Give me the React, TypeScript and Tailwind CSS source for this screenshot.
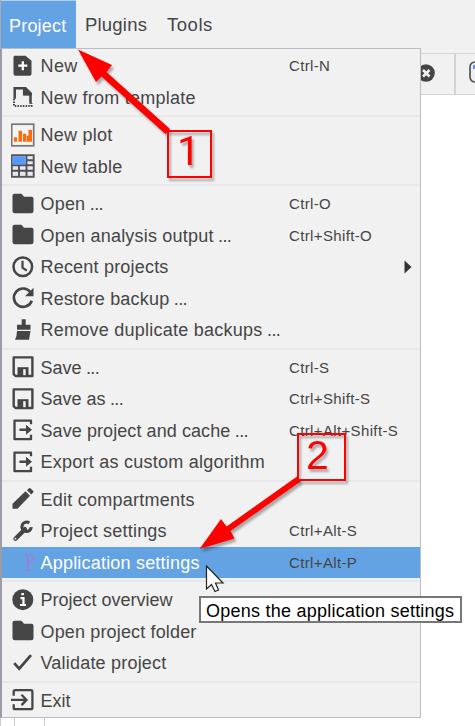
import React from "react";

const K = "#454545";

const icons: Record<string, React.ReactNode> = {
  add: (
    <>
      <path d="M4 2h11l6 5v13q0 2-2 2H5q-2 0-2-2V4q0-2 1-2z" fill={K} />
      <path d="M12.300 7.500v9M7.800 12h9" stroke="#fff" strokeWidth="2.300" />
    </>
  ),
  template: (
    <>
      <path d="M4.200 14V3.500h9.500V9.500H20V19" fill="none" stroke={K} strokeWidth="2.500" />
      <path d="M13 2.200h2.500l6 6v2.300H13z" fill={K} />
      <path d="M3.500 14v7.300h17.500v-3" fill="none" stroke={K} strokeWidth="2" strokeDasharray="1.500 1.200" />
    </>
  ),
  plot: (
    <>
      <rect x="1.200" y="1.500" width="22" height="21.600" fill="#f4f4f4" stroke="#777" strokeWidth="1.700" />
      <path d="M3.500 19v-4.500h3V19zM8 19V8h3.500v11zM12.500 19v-8h3V19zM16 19v-6h2V19zM18 19V7h3.500v12z" fill="#ff6b0a" />
    </>
  ),
  table: (
    <>
      <rect x="1.200" y="1.500" width="22" height="21.600" fill="#e8e8ee" stroke="#555" strokeWidth="1.900" />
      <path d="M1.500 11.500h22M1.500 17h22M16 1.500v21.500M8.500 12v11M16 6.500h7" stroke="#505050" strokeWidth="1.900" />
      <rect x="2.200" y="2.500" width="12.800" height="8.300" fill="#5599ff" />
    </>
  ),
  folder: <path d="M2 3.500q0-1.500 2-1.500h7l2.500 3H21q2 0 2 2v12q0 2.500-2.500 2.500h-16q-2.500 0-2.500-2.500z" fill={K} />,
  clock: (
    <>
      <circle cx="12.300" cy="12" r="9.300" fill="none" stroke={K} strokeWidth="2.500" />
      <path d="M12 6v7l4.300 3" fill="none" stroke={K} strokeWidth="2.200" />
    </>
  ),
  redo: (
    <>
      <path d="M20 6.500A9.200 9.200 0 1 0 21.300 15" fill="none" stroke={K} strokeWidth="2.600" />
      <path d="M23 2v8.500h-8.500z" fill={K} />
    </>
  ),
  broom: <path d="M11.200 1.500h4V7H20v5H6.500V7h4.700zM6.500 13.200H20L18.500 22H4.500q2-4 2-8.800z" fill={K} />,
  save: (
    <>
      <path d="M3.200 2.700h18.700v18.600H5l-1.800-1.800z" fill="none" stroke={K} strokeWidth="2.400" strokeLinejoin="round" />
      <path d="M7 12.500h11v8.500H7z" fill={K} />
      <path d="M12.700 14.500h2.500v6h-2.500z" fill="#f1f1f1" />
    </>
  ),
  export: (
    <>
      <path d="M20.500 6.500V3H4v18.500h16.500V17" fill="none" stroke={K} strokeWidth="2.300" strokeLinejoin="round" />
      <path d="M9 10.800h6.500V7l6 5-6 5v-3.800H9z" fill={K} />
    </>
  ),
  pencil: (
    <>
      <path d="M2 22v-5L15 4.500l4.500 4.500L7 22z" fill={K} />
      <path d="M16.500 3.500l1.700-1.700q1-1 2 0L22.500 4q1 1 0 2L20.800 7.800z" fill={K} />
    </>
  ),
  wrench: (
    <>
      <path d="M5 20L14.500 10.500" stroke={K} strokeWidth="4.400" strokeLinecap="round" />
      <path d="M18.800 4.200A4.700 4.700 0 1 0 20.800 8.500" fill="none" stroke={K} strokeWidth="3.100" />
      <circle cx="5" cy="20" r=".9" fill="#eee" />
    </>
  ),
  app: (
    <path
      d="M14.500 4.500q3 1 3 4V20M18 13q5.500-1.500 5-5.500Q22 4 18.500 5M14.500 20.500h4.500"
      fill="none"
      stroke="#987fdc"
      strokeWidth="1.800"
    />
  ),
  info: (
    <>
      <circle cx="12.300" cy="12" r="10.500" fill={K} />
      <path d="M10 10.500h3V17M9.500 17.300h6M10.800 6.500h2.600" fill="none" stroke="#fff" strokeWidth="2.200" />
    </>
  ),
  check: <path d="M3.700 12.500l5 5.500L20.500 4.500" fill="none" stroke={K} strokeWidth="2.700" />,
  exit: (
    <>
      <path d="M3.200 8V4q0-1.500 1.500-1.500h15.700q1.500 0 1.500 1.500v16q0 1.500-1.500 1.500H4.700q-1.500 0-1.500-1.500v-3.500" fill="none" stroke={K} strokeWidth="2.300" />
      <path d="M0.500 12.200H15M11 7l5 5.200-5 5.200" fill="none" stroke={K} strokeWidth="2.300" />
    </>
  ),
};

type Item = { icon: string; label: string; keys?: string; sub?: boolean; active?: boolean; track?: string };

const WIDE = "tracking-[0.25px]";

const groups: Item[][] = [
  [
    { icon: "add", label: "New", keys: "Ctrl-N", track: "tracking-[0.4px]" },
    { icon: "template", label: "New from template", track: WIDE },
  ],
  [
    { icon: "plot", label: "New plot", track: WIDE },
    { icon: "table", label: "New table" },
  ],
  [
    { icon: "folder", label: "Open ...", keys: "Ctrl-O" },
    { icon: "folder", label: "Open analysis output ...", keys: "Ctrl+Shift-O" },
    { icon: "clock", label: "Recent projects", sub: true },
    { icon: "redo", label: "Restore backup ..." },
    { icon: "broom", label: "Remove duplicate backups ...", track: WIDE },
  ],
  [
    { icon: "save", label: "Save ...", keys: "Ctrl-S", track: "tracking-[0px]" },
    { icon: "save", label: "Save as ...", keys: "Ctrl+Shift-S", track: "tracking-[0px]" },
    { icon: "export", label: "Save project and cache ...", keys: "Ctrl+Alt+Shift-S", track: "tracking-[0.08px]" },
    { icon: "export", label: "Export as custom algorithm", track: "tracking-[0.25px]" },
  ],
  [
    { icon: "pencil", label: "Edit compartments", track: WIDE },
    { icon: "wrench", label: "Project settings", keys: "Ctrl+Alt-S" },
    { icon: "app", label: "Application settings", keys: "Ctrl+Alt-P", active: true },
  ],
  [
    { icon: "info", label: "Project overview", track: "tracking-[0px]" },
    { icon: "folder", label: "Open project folder", track: "tracking-[0.15px]" },
    { icon: "check", label: "Validate project" },
  ],
  [{ icon: "exit", label: "Exit", track: "tracking-[0px]" }],
];

function Label({ text }: { text: string }) {
  const dots = text.endsWith(" ...");
  return (
    <>
      {dots ? text.slice(0, -4) : text}
      {dots && <span className="tracking-[-0.6px]"> ...</span>}
    </>
  );
}

function MenuRow({ item }: { item: Item }) {
  return (
    <div className={`flex h-[31.5px] items-center pl-[9px] ${item.active ? "bg-[#64a3e3]" : ""}`}>
      <svg className="h-6 w-6 shrink-0" viewBox="0.5 0.3 24 24">
        {icons[item.icon]}
      </svg>
      <span className={`mt-px ml-[5.5px] w-[248.5px] shrink-0 ${item.track ?? "tracking-[0.2px]"} ${item.active ? "text-white" : ""}`}>
        <Label text={item.label} />
      </span>
      <span className="text-[15px] tracking-[0.36px]">{item.keys}</span>
      {item.sub && (
        <svg className="ml-[115px] h-3.5 w-2 shrink-0" viewBox="0 0 8 14">
          <path d="M0.500 0.500L7.500 7L0.500 13.500z" fill="#333" />
        </svg>
      )}
    </div>
  );
}

export default function App() {
  return (
    <div className="relative h-[726px] w-[475px] overflow-hidden bg-white font-['Liberation_Sans',Arial,sans-serif] text-[18px] leading-none tracking-[0.2px] whitespace-nowrap text-[#454545]">
      <div className="flex h-[53px] border-l border-[#aaa] bg-[#f1f1f1]">
        <div className="flex h-[48px] w-[75px] items-center border-t border-[#b8cde3] bg-[#64a3e3] pt-0.5 pl-[8px] text-white">Project</div>
        <div className="flex h-[48px] items-center pt-[3px] pl-[9px] text-[18.5px]">Plugins</div>
        <div className="flex h-[48px] items-center pt-[3px] pl-[20px] text-[18.5px] tracking-[0.5px]">Tools</div>
      </div>
      <div className="flex h-[42px] justify-end border-y border-[#d4d4d8] bg-[#f1f1f1]">
        <div className="flex w-[57px] items-center border-r-2 border-[#d4d4d8]">
          <svg className="mb-[3px] ml-[18px] h-[18px] w-[18px] shrink-0" viewBox="0 0 18 18">
            <circle cx="9" cy="9" r="8.800" fill={K} />
            <path d="M6 6l6.500 6.500M12.500 6L6 12.500" stroke="#f1f1f1" strokeWidth="2.600" />
          </svg>
        </div>
        <div className="w-[19px] overflow-hidden">
          <svg className="mt-[7px] ml-[13px] h-6 w-6" viewBox="0 0 24 24">
            <rect x="1" y="1" width="20" height="20" rx="5" fill="#eee" stroke="#555" strokeWidth="1.700" />
            <rect x="4" y="4" width="12" height="4" fill="#5599ff" />
          </svg>
        </div>
      </div>

      <div className="absolute top-[717px] left-[14px] h-[9px] w-[31px] border-x border-[#ccccd0]" />
      <div className="absolute top-[717px] left-0 h-[9px] w-px bg-[#ccccd0]" />

      {/* Dropdown menu */}
      <div className="absolute top-[48px] left-0 flex h-[670px] w-[421px] flex-col border border-[#bcbcc6] border-l-2 border-l-[#9c9ca6] bg-[#f1f1f1] pt-px">
        {groups.map((group, i) => (
          <React.Fragment key={i}>
            {i > 0 && (
              <div className="flex h-[6px] items-center">
                <div className="h-[2px] w-full bg-[#e8e8ea]" />
              </div>
            )}
            {group.map((item) => (
              <MenuRow key={item.label} item={item} />
            ))}
          </React.Fragment>
        ))}
      </div>

      <div className="absolute top-[596px] left-[199px] flex h-[27px] w-[263px] items-center border-2 border-[#777] bg-white pt-0.5 pl-[5px] tracking-[0.24px] text-black">
        Opens the application settings
      </div>

      {/* Callout arrows */}
      <svg className="absolute inset-0 h-[726px] w-[475px] drop-shadow-[2px_3px_1px_rgba(0,0,0,0.3)]" viewBox="0 0 475 726">
        <path d="M78 49.500L112 65l-5.500 7L170 129l-4.500 5L101.500 76.500L96 82z" fill="#f00" />
        <path d="M199.500 549L221 519l5.500 7.500L297 476.500l3.500 5L230.500 531l4 7.500z" fill="#f00" />
      </svg>
      <div className="absolute top-[130px] left-[167px] flex h-[48px] w-[45px] items-center justify-center border-2 border-[#f00] font-['Roboto',sans-serif] text-[41px] text-[#f00] drop-shadow-[2px_3px_1px_rgba(0,0,0,0.3)]">
        <span className="mt-[-5px] ml-[-2px]">1</span>
      </div>
      <div className="absolute top-[433px] left-[297px] flex h-[48px] w-[49px] items-center justify-center border-2 border-[#f00] text-[41px] text-[#f00] drop-shadow-[2px_3px_1px_rgba(0,0,0,0.3)]">
        <span className="mt-[-3px] ml-[-8px]">2</span>
      </div>

      <svg className="absolute top-[565px] left-[205px] h-7 w-5" viewBox="0 0 20 28">
        <path d="M1.500 1v23l5-4.500 3.500 7 3.500-1.500-3-7H18z" fill="#fff" stroke="#222" strokeWidth="1.200" />
      </svg>
    </div>
  );
}
